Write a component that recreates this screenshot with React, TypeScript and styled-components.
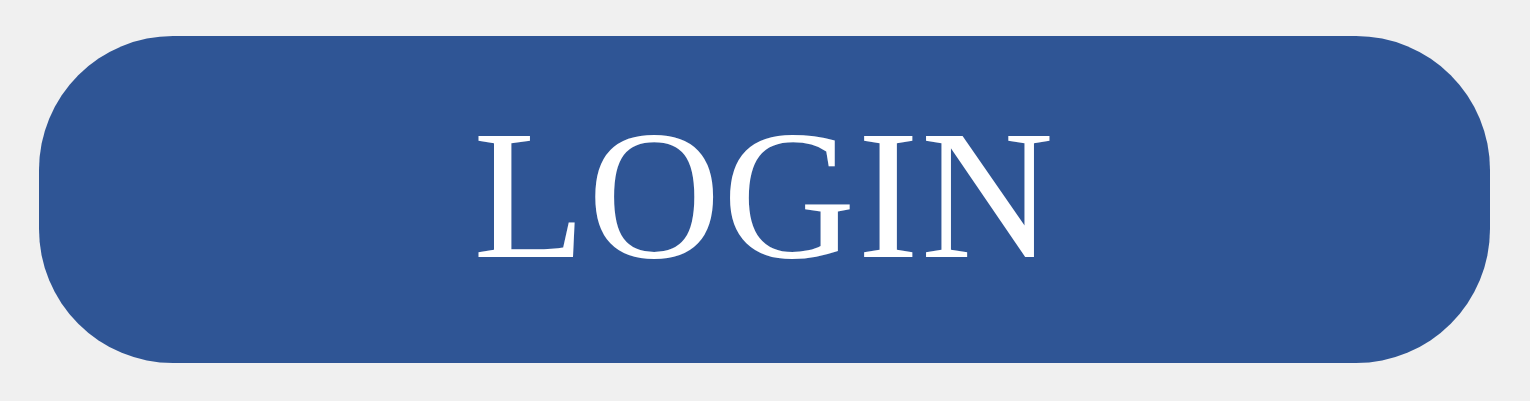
import styled, { createGlobalStyle } from 'styled-components'

const GlobalStyle = createGlobalStyle`
  html, body {
    margin: 0;
    padding: 0;
    background: #f0f0f0;
  }
`

function App() {
  return (
    <>
      <GlobalStyle />
      <Page>
        <LoginButton type="button">LOGIN</LoginButton>
      </Page>
    </>
  )
}

const Page = styled.div`
  display: flex;
  width: 1530px;
  height: 401px;
  box-sizing: border-box;
  padding: 36px 40px 38px 39px;
`

const LoginButton = styled.button`
  flex: 1;
  display: flex;
  align-items: center;
  justify-content: center;
  border: none;
  border-radius: 134px;
  background: #2f5595;
  color: #ffffff;
  font-family: 'Liberation Serif', 'Times New Roman', serif;
  font-size: 184px;
  letter-spacing: 2px;
  line-height: 1;
  padding: 0 0 9px;
  cursor: pointer;
`

export default App
